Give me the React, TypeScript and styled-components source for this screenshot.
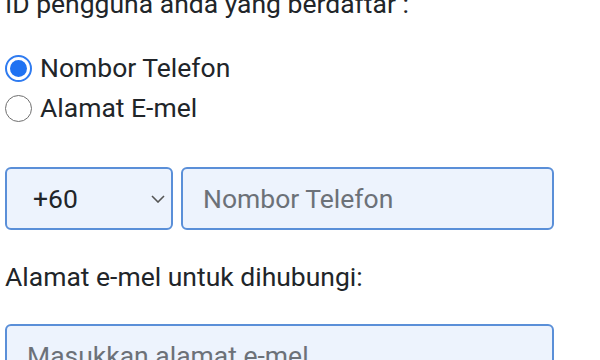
import React from "react";
import styled, { createGlobalStyle } from "styled-components";

const Global = createGlobalStyle`
  html, body { margin: 0; padding: 0; background: #ffffff; }
  body { font-family: Roboto, "Noto Sans", sans-serif; color: #212529; overflow: hidden; }
  * { box-sizing: border-box; }
`;

const Page = styled.div`
  width: 600px;
  height: 360px;
  overflow: hidden;
`;

const Content = styled.div`
  margin-top: -16px;
  padding-left: 5px;
  display: flex;
  flex-direction: column;
  font-size: 26.5px;
  line-height: 40px;
`;

const Text = styled.div<{ $after?: number }>`
  white-space: nowrap;
  margin-bottom: ${(p) => p.$after ?? 0}px;
`;

const RadioGroup = styled.div`
  display: flex;
  flex-direction: column;
  margin-bottom: 39px;
`;

const RadioRow = styled.label`
  display: flex;
  align-items: center;
  gap: 8px;
  height: 40px;
`;

const RadioDot = styled.span<{ $checked?: boolean }>`
  width: 27px;
  height: 27px;
  border-radius: 50%;
  flex: none;
  border: ${(p) => (p.$checked ? "2px solid #2f7bf0" : "1.5px solid #6f6f6f")};
  display: flex;
  align-items: center;
  justify-content: center;
  background: #fff;
  &::after {
    content: "";
    display: ${(p) => (p.$checked ? "block" : "none")};
    width: 17px;
    height: 17px;
    border-radius: 50%;
    background: #1f72f2;
  }
`;

const PhoneRow = styled.div`
  display: flex;
  gap: 8px;
  margin-bottom: 27px;
`;

const Field = styled.div<{ $w: number }>`
  position: relative;
  width: ${(p) => p.$w}px;
  height: 63px;
  border: 2px solid #5a8fd8;
  border-radius: 6px;
  background: #edf3fd;
  display: flex;
  align-items: center;
  padding-left: ${(p) => (p.$w < 200 ? 26 : 20)}px;
  font-size: 26.5px;
  white-space: nowrap;
  flex: none;
`;

const Value = styled.span`
  color: #212529;
`;

const Placeholder = styled.span`
  color: #6c7178;
`;

const Chevron = styled.svg`
  position: absolute;
  right: 6px;
  top: 50%;
  transform: translateY(-50%);
`;

export default function App() {
  return (
    <Page>
      <Global />
      <Content>
        <Text $after={24}>ID pengguna anda yang berdaftar :</Text>
        <RadioGroup>
          <RadioRow>
            <RadioDot $checked />
            Nombor Telefon
          </RadioRow>
          <RadioRow>
            <RadioDot />
            Alamat E-mel
          </RadioRow>
        </RadioGroup>
        <PhoneRow>
          <Field $w={168}>
            <Value>+60</Value>
            <Chevron width="14" height="8" viewBox="0 0 14 8">
              <path d="M1 1 L7 7 L13 1" fill="none" stroke="#555" strokeWidth="1.6" />
            </Chevron>
          </Field>
          <Field $w={373}>
            <Placeholder>Nombor Telefon</Placeholder>
          </Field>
        </PhoneRow>
        <Text $after={27}>Alamat e-mel untuk dihubungi:</Text>
        <Field $w={549}>
          <Placeholder>Masukkan alamat e-mel</Placeholder>
        </Field>
      </Content>
    </Page>
  );
}
